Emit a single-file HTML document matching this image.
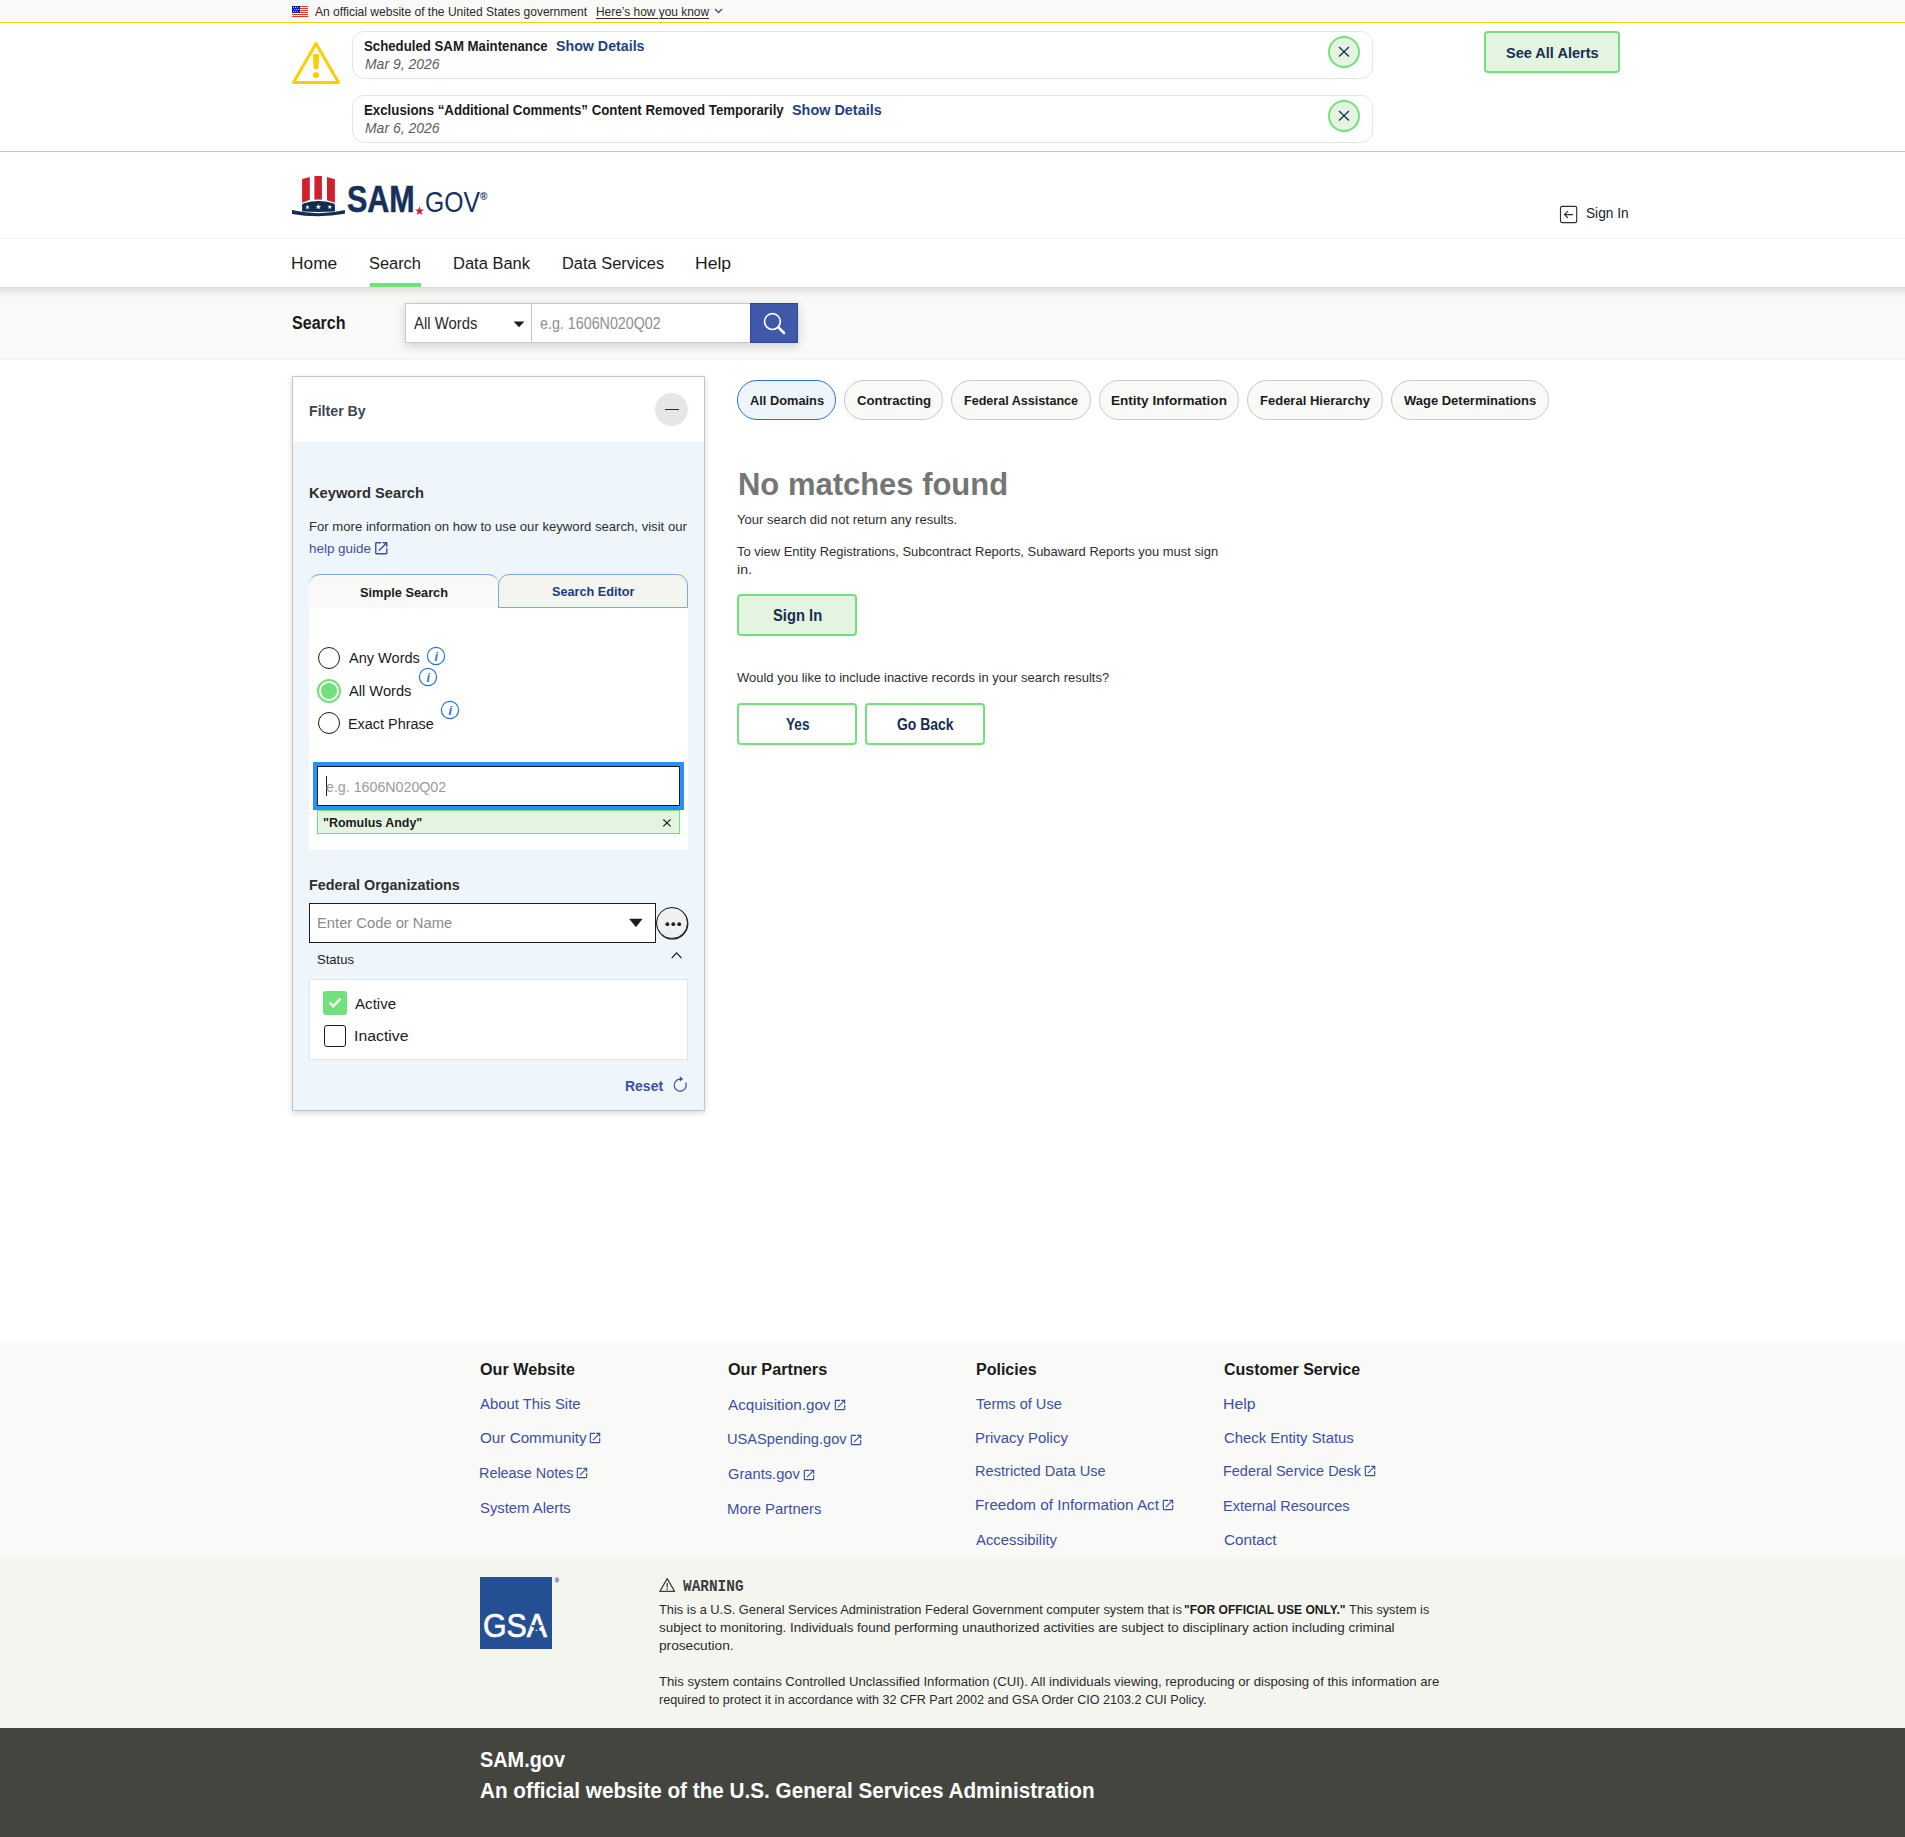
<!DOCTYPE html>
<html lang="en"><head><meta charset="utf-8"><title>SAM.gov | Search</title>
<style>
html,body{margin:0;padding:0;}
body{position:relative;width:1905px;height:1837px;overflow:hidden;background:#fff;font-family:"Liberation Sans",sans-serif;color:#1b1b1b;}
.t{position:absolute;white-space:pre;line-height:1;transform-origin:0 50%;display:block;margin:0;padding:0;border:0;background:none;font-family:"Liberation Sans",sans-serif;font-weight:400;font-style:normal;color:#1b1b1b;text-decoration:none;letter-spacing:normal;text-align:left;cursor:default;}
.a{position:absolute;box-sizing:border-box;}
svg{position:absolute;overflow:visible;}
</style></head>
<body>
<section aria-label="Official government website">
<div class="a" style="left:0px;top:0px;width:1905px;height:21px;background:#f9f9f7;"></div>
<svg style="left:292px;top:6px" width="16" height="11" viewBox="0 0 16 11"><rect width="16" height="11" fill="#fff"/><rect y="0" width="16" height="1" fill="#e0381a"/><rect y="2" width="16" height="1" fill="#e0381a"/><rect y="4" width="16" height="1" fill="#e0381a"/><rect y="6" width="16" height="1" fill="#e0381a"/><rect y="8" width="16" height="1" fill="#e0381a"/><rect y="10" width="16" height="1" fill="#e0381a"/><rect width="8" height="7" fill="#0a1fae"/><circle cx="1.5" cy="1.5" r="0.5" fill="#fff"/><circle cx="3.5" cy="1.5" r="0.5" fill="#fff"/><circle cx="5.5" cy="1.5" r="0.5" fill="#fff"/><circle cx="2.5" cy="3.45" r="0.5" fill="#fff"/><circle cx="4.5" cy="3.45" r="0.5" fill="#fff"/><circle cx="6.5" cy="3.45" r="0.5" fill="#fff"/><circle cx="1.5" cy="5.5" r="0.5" fill="#fff"/><circle cx="3.5" cy="5.5" r="0.5" fill="#fff"/><circle cx="5.5" cy="5.5" r="0.5" fill="#fff"/></svg>
<svg style="left:714px;top:8px" width="9" height="6" viewBox="0 0 9 6"><path d="M1 1 L4.5 4.5 L8 1" fill="none" stroke="#3f4fa3" stroke-width="1.4"/></svg>
<p class="t" style="left:315.4px;top:6px;font-size:12.1px;color:#2a2a2a;transform:scaleX(0.9951);">An official website of the United States government</p>
<a class="t" href="#" style="left:595.6px;top:6px;font-size:12.1px;color:#2a2a2a;transform:scaleX(0.9851);text-decoration:underline;text-decoration-thickness:1px;text-underline-offset:1.5px;">Here’s how you know</a>
</section>
<section aria-label="Alerts">
<div class="a" style="left:0px;top:22px;width:1905px;height:130px;background:#fff;border-top:1px solid #face00;border-bottom:1px solid #face00;"></div>
<svg style="left:288px;top:36px" width="56" height="52" viewBox="0 0 56 52"><path d="M28 7.5 L50.5 46.5 L5.5 46.5 Z" fill="none" stroke="#face00" stroke-width="3" stroke-linejoin="round"/><path d="M25.3 18.5 h5.4 l-0.9 14 h-3.6 Z" fill="#face00" stroke="#face00" stroke-width="1" stroke-linejoin="round"/><circle cx="28" cy="39" r="3.1" fill="#face00"/></svg>
<div class="a" style="left:352px;top:31px;width:1021px;height:48px;border:1px solid #e4e4e4;border-radius:12px;background:#fff;"></div>
<div class="a" style="left:352px;top:95px;width:1021px;height:48px;border:1px solid #e4e4e4;border-radius:12px;background:#fff;"></div>
<div class="a" style="left:1328px;top:36px;width:32px;height:32px;border:2px solid #70e17b;border-radius:50%;background:#e3f5e1;"></div>
<svg style="left:1338px;top:46px" width="12" height="12" viewBox="0 0 12 12"><path d="M1 1 L11 10.5 M11 1 L1 10.5" stroke="#162e51" stroke-width="1.3" fill="none"/></svg>
<div class="a" style="left:1328px;top:100px;width:32px;height:32px;border:2px solid #70e17b;border-radius:50%;background:#e3f5e1;"></div>
<svg style="left:1338px;top:110px" width="12" height="12" viewBox="0 0 12 12"><path d="M1 1 L11 10.5 M11 1 L1 10.5" stroke="#162e51" stroke-width="1.3" fill="none"/></svg>
<div class="a" style="left:1484px;top:31px;width:136px;height:42px;border:2px solid #70e17b;border-radius:4px;background:#e3f5e1;"></div>
<h2 class="t" style="left:364.4px;top:39px;font-size:14.9px;font-weight:700;transform:scaleX(0.8878);">Scheduled SAM Maintenance</h2>
<a class="t" href="#" style="left:555.8px;top:39px;font-size:14.9px;font-weight:700;color:#1f3f83;transform:scaleX(0.9551);">Show Details</a>
<time class="t" style="left:364.5px;top:57px;font-size:14.9px;color:#5c5c5c;font-style:italic;transform:scaleX(0.9368);">Mar 9, 2026</time>
<h2 class="t" style="left:364.2px;top:103px;font-size:14.9px;font-weight:700;transform:scaleX(0.8905);">Exclusions “Additional Comments” Content Removed Temporarily</h2>
<a class="t" href="#" style="left:791.5px;top:103px;font-size:14.9px;font-weight:700;color:#1f3f83;transform:scaleX(0.9674);">Show Details</a>
<time class="t" style="left:364.5px;top:121px;font-size:14.9px;color:#5c5c5c;font-style:italic;transform:scaleX(0.9368);">Mar 6, 2026</time>
<button class="t" type="button" style="left:1505.9px;top:45px;font-size:15.3px;font-weight:700;color:#162e51;transform:scaleX(0.9495);">See All Alerts</button>
</section>
<header>
<svg style="left:288px;top:170px" width="64" height="52" viewBox="288 170 64 52"><path d="M302.1 179.1 L309.8 176.9 L309.8 199.7 L302.1 202.75 Z" fill="#d0202e"/><path d="M314.4 176.05 L321.9 176.05 L321.9 199.7 Q318.2 199.3 314.4 199.7 Z" fill="#d0202e"/><path d="M327 176.9 L334.9 179.2 L334.9 202.75 L327 200.2 Z" fill="#d0202e"/><path d="M302.1 211.5 L302.1 205.3 Q302.1 204 304 203.3 Q318.4 198.5 333 203.3 Q334.9 204 334.9 205.3 L334.9 211.5 Q318.4 212.3 302.1 211.5 Z" fill="#112e51"/><path d="M292 210 Q318.4 216.5 344.9 210 L344.9 213.8 Q318.4 218.6 292 214 Z" fill="#112e51"/><polygon points="307.50,204.80 308.06,206.42 309.78,206.46 308.41,207.50 308.91,209.14 307.50,208.16 306.09,209.14 306.59,207.50 305.22,206.46 306.94,206.42" fill="#fff"/><polygon points="318.40,203.90 319.11,205.93 321.25,205.97 319.54,207.27 320.16,209.33 318.40,208.10 316.64,209.33 317.26,207.27 315.55,205.97 317.69,205.93" fill="#fff"/><polygon points="329.80,204.70 330.36,206.32 332.08,206.36 330.71,207.40 331.21,209.04 329.80,208.06 328.39,209.04 328.89,207.40 327.52,206.36 329.24,206.32" fill="#fff"/></svg>
<svg style="left:414px;top:205px" width="12" height="12" viewBox="0 0 12 12"><polygon points="5.50,1.20 6.63,4.45 10.07,4.52 7.33,6.59 8.32,9.88 5.50,7.92 2.68,9.88 3.67,6.59 0.93,4.52 4.37,4.45" fill="#d0202e"/></svg>
<svg style="left:1559px;top:205px" width="20" height="20" viewBox="0 0 20 20"><rect x="1.5" y="1.4" width="16.2" height="16.2" rx="1.6" fill="none" stroke="#2e2e2e" stroke-width="1.15"/><path d="M14 9.6 H5.6 M8.9 6.2 L5.5 9.6 L8.9 13" fill="none" stroke="#2e2e2e" stroke-width="1.1"/></svg>
<span class="t" style="left:346.9px;top:181px;font-size:37px;font-weight:700;color:#17305a;transform:scaleX(0.8231);-webkit-text-stroke:0.55px currentColor;">SAM</span>
<span class="t" style="left:424.8px;top:188px;font-size:28.6px;color:#17305a;transform:scaleX(0.8645);">GOV</span>
<span class="t" style="left:479.9px;top:192px;font-size:10px;font-weight:700;color:#17305a;transform:scaleX(1.0000);">®</span>
<a class="t" href="#" style="left:1585.5px;top:206px;font-size:14.9px;transform:scaleX(0.9178);">Sign In</a>
</header>
<nav aria-label="Primary navigation">
<div class="a" style="left:0px;top:238px;width:1905px;height:1px;background:#f5f5f1;"></div>
<div class="a" style="left:370px;top:283px;width:51px;height:4px;background:#70e17b;"></div>
<a class="t" href="#" style="left:291.4px;top:255px;font-size:17.1px;transform:scaleX(1.0127);">Home</a>
<a class="t" href="#" style="left:369.3px;top:255px;font-size:17.1px;transform:scaleX(0.9588);">Search</a>
<a class="t" href="#" style="left:452.9px;top:255px;font-size:17.1px;transform:scaleX(0.9650);">Data Bank</a>
<a class="t" href="#" style="left:561.7px;top:255px;font-size:17.1px;transform:scaleX(0.9597);">Data Services</a>
<a class="t" href="#" style="left:694.9px;top:255px;font-size:17.1px;transform:scaleX(1.0283);">Help</a>
</nav>
<section aria-label="Search">
<div class="a" style="left:0px;top:287px;width:1905px;height:73px;background:#f9f9f7;border-bottom:1px solid #f3f3ee;"></div>
<div class="a" style="left:0px;top:287px;width:1905px;height:11px;background:linear-gradient(rgba(0,0,0,.125),rgba(0,0,0,.07) 30%,rgba(0,0,0,.025) 65%,rgba(0,0,0,0));"></div>
<div class="a" style="left:405px;top:303px;width:393px;height:40px;box-shadow:0 3px 10px rgba(0,0,0,.17);"></div>
<div class="a" style="left:405px;top:303px;width:127px;height:40px;background:#fff;border:1px solid #c9c9c9;"></div>
<div class="a" style="left:531px;top:303px;width:219px;height:40px;background:#fff;border:1px solid #c9c9c9;border-right:none;"></div>
<div class="a" style="left:750px;top:303px;width:48px;height:40px;background:#4058a9;border:1px solid #3049a0;"></div>
<svg style="left:508px;top:316px" width="22" height="16" viewBox="0 0 22 16"><path d="M5.6 5.4 L16.4 5.4 L11 11.2 Z" fill="#1b1b1b"/></svg>
<svg style="left:760px;top:310px" width="30" height="28" viewBox="0 0 30 28"><circle cx="12.4" cy="11.6" r="7.9" fill="none" stroke="#fff" stroke-width="1.7"/><path d="M18.2 17.2 L24 23" stroke="#fff" stroke-width="2.6" stroke-linecap="round"/></svg>
<label class="t" style="left:291.7px;top:315px;font-size:17.6px;font-weight:700;transform:scaleX(0.9130);">Search</label>
<span class="t" style="left:413.7px;top:316px;font-size:15.8px;color:#2a2a2a;transform:scaleX(0.9410);">All Words</span>
<span class="t" style="left:539.8px;top:316px;font-size:15.8px;color:#8f8f8f;transform:scaleX(0.9044);">e.g. 1606N020Q02</span>
</section>
<aside aria-label="Filter By">
<div class="a" style="left:292px;top:376px;width:413px;height:735px;background:#eff6fb;border:1px solid #c6c6c6;box-shadow:0 2px 6px rgba(0,0,0,.16);"></div>
<div class="a" style="left:293px;top:377px;width:411px;height:65px;background:#fff;"></div>
<div class="a" style="left:655px;top:393px;width:33px;height:33px;background:#e6e6e6;border-radius:50%;"></div>
<div class="a" style="left:665px;top:408.7px;width:14px;height:1.6px;background:#162e51;"></div>
<svg style="left:372.73px;top:540.23px" width="16.53" height="16.53" viewBox="0 0 24 24"><path d="M19 19H5V5h7V3H5c-1.11 0-2 .9-2 2v14c0 1.1.89 2 2 2h14c1.1 0 2-.9 2-2v-7h-2v7zM14 3v2h3.59l-9.83 9.83 1.41 1.41L19 6.41V10h2V3h-7z" fill="#3f4fa3"/></svg>
<div class="a" style="left:309px;top:574px;width:190px;height:34px;background:#f9f9f7;border-top:1px solid #7ba7ee;border-radius:11px 11px 0 0;"></div>
<div class="a" style="left:498px;top:574px;width:190px;height:34px;background:#f4f5ef;border:1px solid #7ba7ee;border-radius:11px 11px 0 0;"></div>
<div class="a" style="left:309px;top:608px;width:379px;height:242px;background:#fff;"></div>
<div class="a" style="left:318px;top:647px;width:22px;height:22px;border:1.6px solid #1b1b1b;border-radius:50%;background:#fff;"></div>
<div class="a" style="left:316.8px;top:679px;width:24px;height:24px;border:2.2px solid #70e17b;border-radius:50%;background:#fff;"></div>
<div class="a" style="left:320.5px;top:682.7px;width:16.6px;height:16.6px;border-radius:50%;background:#70e17b;"></div>
<div class="a" style="left:318px;top:712.3px;width:22px;height:22px;border:1.6px solid #1b1b1b;border-radius:50%;background:#fff;"></div>
<svg style="left:426.2px;top:646.2px" width="20" height="20" viewBox="0 0 20 20"><circle cx="10" cy="10" r="8.6" fill="none" stroke="#2672de" stroke-width="1.2"/></svg>
<svg style="left:418.1px;top:667.2px" width="20" height="20" viewBox="0 0 20 20"><circle cx="10" cy="10" r="8.6" fill="none" stroke="#2672de" stroke-width="1.2"/></svg>
<svg style="left:440px;top:700.2px" width="20" height="20" viewBox="0 0 20 20"><circle cx="10" cy="10" r="8.6" fill="none" stroke="#2672de" stroke-width="1.2"/></svg>
<div class="a" style="left:317px;top:766px;width:363px;height:40px;background:#fff;border:1px solid #1b1b1b;box-shadow:0 0 0 4px #2491ff;"></div>
<div class="a" style="left:326px;top:776px;width:1px;height:20px;background:#1b1b1b;"></div>
<div class="a" style="left:317px;top:810px;width:363px;height:24px;background:#e3f5e1;border:1px solid #70e17b;"></div>
<svg style="left:662px;top:818px" width="10" height="10" viewBox="0 0 10 10"><path d="M1.3 1.4 L8.6 8.4 M8.6 1.4 L1.3 8.4" stroke="#1b1b1b" stroke-width="1.3" fill="none"/></svg>
<div class="a" style="left:309px;top:903px;width:347px;height:40px;background:#fff;border:1px solid #1b1b1b;"></div>
<svg style="left:626px;top:915px" width="20" height="16" viewBox="0 0 20 16"><path d="M3.7 4.1 L16.1 4.1 L9.9 11.8 Z" fill="#1b1b1b" stroke="#1b1b1b" stroke-width="0.6" stroke-linejoin="round"/></svg>
<div class="a" style="left:656px;top:907px;width:32px;height:32px;border:1.7px solid #1b1b1b;border-radius:50%;background:#f0f0f0;box-shadow:0.4px 0.6px 0 #1b1b1b;"></div>
<svg style="left:662px;top:920px" width="20" height="8" viewBox="0 0 20 8"><circle cx="5.4" cy="4.2" r="1.9" fill="#1b1b1b"/><circle cx="11.3" cy="4.2" r="1.9" fill="#1b1b1b"/><circle cx="17.2" cy="4.2" r="1.9" fill="#1b1b1b"/></svg>
<svg style="left:670px;top:950px" width="14" height="10" viewBox="0 0 14 10"><path d="M1.7 8.2 L6.6 2.8 L11.5 8.2" fill="none" stroke="#1b1b1b" stroke-width="1.2"/></svg>
<div class="a" style="left:309px;top:979px;width:379px;height:81px;background:#fff;border:1px solid #e3e6e8;"></div>
<div class="a" style="left:323px;top:991px;width:24px;height:24px;background:#70e17b;border-radius:3px;"></div>
<svg style="left:323px;top:991px" width="24" height="24" viewBox="0 0 24 24"><path d="M6.8 11.6 L10.3 15.2 L17.6 7.6" fill="none" stroke="#fff" stroke-width="2.4"/></svg>
<div class="a" style="left:324px;top:1025px;width:22px;height:22px;background:#fff;border:1.7px solid #1b1b1b;border-radius:3px;"></div>
<svg style="left:671px;top:1074px" width="18" height="20" viewBox="0 0 18 20"><path d="M9.2 5.2 A6 6 0 1 0 14.6 8.6" fill="none" stroke="#3f4fa3" stroke-width="1.2"/><path d="M8.8 2.2 L12.2 5 L8.8 7.6 Z" fill="#3f4fa3"/></svg>
<h2 class="t" style="left:308.5px;top:403px;font-size:15.2px;font-weight:700;color:#3d4551;transform:scaleX(0.9329);">Filter By</h2>
<h3 class="t" style="left:308.5px;top:485px;font-size:15.2px;font-weight:700;color:#2e2e2e;transform:scaleX(0.9661);">Keyword Search</h3>
<p class="t" style="left:308.5px;top:520px;font-size:13.5px;color:#2e2e2e;transform:scaleX(0.9722);">For more information on how to use our keyword search, visit our</p>
<a class="t" href="#" style="left:308.5px;top:542px;font-size:13.5px;color:#3f4fa3;transform:scaleX(0.9945);">help guide</a>
<button class="t" type="button" style="left:359.5px;top:586px;font-size:13.5px;font-weight:700;transform:scaleX(0.9461);">Simple Search</button>
<button class="t" type="button" style="left:551.8px;top:585px;font-size:13.5px;font-weight:700;color:#1c3b80;transform:scaleX(0.9392);">Search Editor</button>
<label class="t" style="left:349.0px;top:650px;font-size:15.2px;transform:scaleX(0.9578);">Any Words</label>
<label class="t" style="left:349.0px;top:683px;font-size:15.2px;transform:scaleX(0.9649);">All Words</label>
<label class="t" style="left:348.0px;top:716px;font-size:15.2px;transform:scaleX(0.9497);">Exact Phrase</label>
<span class="t" style="left:434.6px;top:651px;font-size:12.5px;font-weight:700;color:#2672de;font-style:italic;transform:scaleX(1.0000);">i</span>
<span class="t" style="left:426.5px;top:672px;font-size:12.5px;font-weight:700;color:#2672de;font-style:italic;transform:scaleX(1.0000);">i</span>
<span class="t" style="left:448.4px;top:705px;font-size:12.5px;font-weight:700;color:#2672de;font-style:italic;transform:scaleX(1.0000);">i</span>
<span class="t" style="left:326.2px;top:779px;font-size:15.5px;color:#959ca2;transform:scaleX(0.9175);">e.g. 1606N020Q02</span>
<span class="t" style="left:323.4px;top:816px;font-size:13.6px;font-weight:700;transform:scaleX(0.9164);">"Romulus Andy"</span>
<h3 class="t" style="left:308.5px;top:877px;font-size:15.2px;font-weight:700;color:#2e2e2e;transform:scaleX(0.9457);">Federal Organizations</h3>
<span class="t" style="left:317.1px;top:915px;font-size:15.5px;color:#8a8a8a;transform:scaleX(0.9511);">Enter Code or Name</span>
<h4 class="t" style="left:316.6px;top:953px;font-size:13.2px;transform:scaleX(0.9870);">Status</h4>
<label class="t" style="left:354.9px;top:996px;font-size:15.2px;transform:scaleX(0.9952);">Active</label>
<label class="t" style="left:353.7px;top:1028px;font-size:15.2px;transform:scaleX(1.0421);">Inactive</label>
<button class="t" type="button" style="left:624.5px;top:1078px;font-size:15.2px;font-weight:700;color:#3f4fa3;transform:scaleX(0.9203);">Reset</button>
</aside>
<main>
<div class="a" style="left:737px;top:380px;width:98.7px;height:40px;background:#eff6fb;border:1px solid #2672de;border-radius:20px;"></div>
<div class="a" style="left:844px;top:380px;width:98.9px;height:40px;background:#f9f9f7;border:1px solid #c9c9c9;border-radius:20px;"></div>
<div class="a" style="left:951.2px;top:380px;width:139.7px;height:40px;background:#f9f9f7;border:1px solid #c9c9c9;border-radius:20px;"></div>
<div class="a" style="left:1099.2px;top:380px;width:139.7px;height:40px;background:#f9f9f7;border:1px solid #c9c9c9;border-radius:20px;"></div>
<div class="a" style="left:1247.2px;top:380px;width:135.5px;height:40px;background:#f9f9f7;border:1px solid #c9c9c9;border-radius:20px;"></div>
<div class="a" style="left:1391px;top:380px;width:157.8px;height:40px;background:#f9f9f7;border:1px solid #c9c9c9;border-radius:20px;"></div>
<div class="a" style="left:737px;top:594px;width:120px;height:42px;border:2px solid #70e17b;border-radius:4px;background:#e3f5e1;"></div>
<div class="a" style="left:737px;top:703px;width:120px;height:42px;border:2px solid #70e17b;border-radius:4px;background:#fff;"></div>
<div class="a" style="left:865px;top:703px;width:120px;height:42px;border:2px solid #70e17b;border-radius:4px;background:#fff;"></div>
<button class="t" type="button" style="left:749.5px;top:394px;font-size:13.6px;font-weight:700;transform:scaleX(0.9425);">All Domains</button>
<button class="t" type="button" style="left:856.8px;top:394px;font-size:13.6px;font-weight:700;transform:scaleX(0.9726);">Contracting</button>
<button class="t" type="button" style="left:963.8px;top:394px;font-size:13.6px;font-weight:700;transform:scaleX(0.9245);">Federal Assistance</button>
<button class="t" type="button" style="left:1111.0px;top:394px;font-size:13.6px;font-weight:700;transform:scaleX(0.9968);">Entity Information</button>
<button class="t" type="button" style="left:1259.8px;top:394px;font-size:13.6px;font-weight:700;transform:scaleX(0.9571);">Federal Hierarchy</button>
<button class="t" type="button" style="left:1403.7px;top:394px;font-size:13.6px;font-weight:700;transform:scaleX(0.9546);">Wage Determinations</button>
<h1 class="t" style="left:737.9px;top:470px;font-size:30.8px;font-weight:700;color:#757575;transform:scaleX(1.0055);">No matches found</h1>
<p class="t" style="left:736.9px;top:513px;font-size:13.4px;color:#2e2e2e;transform:scaleX(0.9750);">Your search did not return any results.</p>
<p class="t" style="left:737.2px;top:545px;font-size:13.4px;color:#2e2e2e;transform:scaleX(0.9663);">To view Entity Registrations, Subcontract Reports, Subaward Reports you must sign</p>
<span class="t" style="left:737.4px;top:563px;font-size:13.4px;color:#2e2e2e;transform:scaleX(1.0538);">in.</span>
<button class="t" type="button" style="left:773.0px;top:608px;font-size:15.8px;font-weight:700;color:#162e51;transform:scaleX(0.9345);">Sign In</button>
<p class="t" style="left:737.2px;top:671px;font-size:13.4px;color:#2e2e2e;transform:scaleX(0.9696);">Would you like to include inactive records in your search results?</p>
<button class="t" type="button" style="left:785.7px;top:717px;font-size:15.8px;font-weight:700;color:#162e51;transform:scaleX(0.8611);">Yes</button>
<button class="t" type="button" style="left:896.9px;top:717px;font-size:15.8px;font-weight:700;color:#162e51;transform:scaleX(0.8822);">Go Back</button>
</main>
<footer>
<div class="a" style="left:0px;top:1343px;width:1905px;height:214px;background:#f9f9f7;"></div>
<div class="a" style="left:0px;top:1557px;width:1905px;height:171px;background:#f5f5f0;"></div>
<div class="a" style="left:0px;top:1728px;width:1905px;height:109px;background:#454540;"></div>
<svg style="left:588.45px;top:1430.85px" width="14.0" height="14.0" viewBox="0 0 24 24"><path d="M19 19H5V5h7V3H5c-1.11 0-2 .9-2 2v14c0 1.1.89 2 2 2h14c1.1 0 2-.9 2-2v-7h-2v7zM14 3v2h3.59l-9.83 9.83 1.41 1.41L19 6.41V10h2V3h-7z" fill="#3f4fa3"/></svg>
<svg style="left:574.55px;top:1465.95px" width="14.0" height="14.0" viewBox="0 0 24 24"><path d="M19 19H5V5h7V3H5c-1.11 0-2 .9-2 2v14c0 1.1.89 2 2 2h14c1.1 0 2-.9 2-2v-7h-2v7zM14 3v2h3.59l-9.83 9.83 1.41 1.41L19 6.41V10h2V3h-7z" fill="#3f4fa3"/></svg>
<svg style="left:832.55px;top:1397.75px" width="14.0" height="14.0" viewBox="0 0 24 24"><path d="M19 19H5V5h7V3H5c-1.11 0-2 .9-2 2v14c0 1.1.89 2 2 2h14c1.1 0 2-.9 2-2v-7h-2v7zM14 3v2h3.59l-9.83 9.83 1.41 1.41L19 6.41V10h2V3h-7z" fill="#3f4fa3"/></svg>
<svg style="left:848.85px;top:1432.75px" width="14.0" height="14.0" viewBox="0 0 24 24"><path d="M19 19H5V5h7V3H5c-1.11 0-2 .9-2 2v14c0 1.1.89 2 2 2h14c1.1 0 2-.9 2-2v-7h-2v7zM14 3v2h3.59l-9.83 9.83 1.41 1.41L19 6.41V10h2V3h-7z" fill="#3f4fa3"/></svg>
<svg style="left:801.55px;top:1467.75px" width="14.0" height="14.0" viewBox="0 0 24 24"><path d="M19 19H5V5h7V3H5c-1.11 0-2 .9-2 2v14c0 1.1.89 2 2 2h14c1.1 0 2-.9 2-2v-7h-2v7zM14 3v2h3.59l-9.83 9.83 1.41 1.41L19 6.41V10h2V3h-7z" fill="#3f4fa3"/></svg>
<svg style="left:1160.85px;top:1498.35px" width="14.0" height="14.0" viewBox="0 0 24 24"><path d="M19 19H5V5h7V3H5c-1.11 0-2 .9-2 2v14c0 1.1.89 2 2 2h14c1.1 0 2-.9 2-2v-7h-2v7zM14 3v2h3.59l-9.83 9.83 1.41 1.41L19 6.41V10h2V3h-7z" fill="#3f4fa3"/></svg>
<svg style="left:1362.95px;top:1464.25px" width="14.0" height="14.0" viewBox="0 0 24 24"><path d="M19 19H5V5h7V3H5c-1.11 0-2 .9-2 2v14c0 1.1.89 2 2 2h14c1.1 0 2-.9 2-2v-7h-2v7zM14 3v2h3.59l-9.83 9.83 1.41 1.41L19 6.41V10h2V3h-7z" fill="#3f4fa3"/></svg>
<div class="a" style="left:480px;top:1577px;width:72px;height:72px;background:#245093;"></div>
<svg style="left:658px;top:1576px" width="19" height="18" viewBox="0 0 19 18"><path d="M9.2 2.6 L16.6 15.4 L1.8 15.4 Z" fill="none" stroke="#3d3d3d" stroke-width="1.2" stroke-linejoin="round"/><path d="M9.2 7 V11.4 M9.2 12.6 V14" stroke="#3d3d3d" stroke-width="1.3"/></svg>
<svg style="left:526px;top:1616px;z-index:3" width="22" height="20" viewBox="526 1616 22 20"><polygon points="536.50,1620.80 538.00,1625.13 542.59,1625.22 538.93,1627.99 540.26,1632.38 536.50,1629.76 532.74,1632.38 534.07,1627.99 530.41,1625.22 535.00,1625.13" fill="#245093"/></svg>
<h3 class="t" style="left:479.8px;top:1362px;font-size:16.8px;font-weight:700;transform:scaleX(0.9630);">Our Website</h3>
<h3 class="t" style="left:727.8px;top:1362px;font-size:16.8px;font-weight:700;transform:scaleX(0.9668);">Our Partners</h3>
<h3 class="t" style="left:975.6px;top:1362px;font-size:16.8px;font-weight:700;transform:scaleX(0.9547);">Policies</h3>
<h3 class="t" style="left:1223.6px;top:1362px;font-size:16.8px;font-weight:700;transform:scaleX(0.9539);">Customer Service</h3>
<a class="t" href="#" style="left:480.2px;top:1397px;font-size:14.9px;color:#3f4fa3;transform:scaleX(0.9983);">About This Site</a>
<a class="t" href="#" style="left:479.7px;top:1431px;font-size:14.9px;color:#3f4fa3;transform:scaleX(1.0233);">Our Community</a>
<a class="t" href="#" style="left:479.2px;top:1466px;font-size:14.9px;color:#3f4fa3;transform:scaleX(0.9657);">Release Notes</a>
<a class="t" href="#" style="left:479.6px;top:1501px;font-size:14.9px;color:#3f4fa3;transform:scaleX(0.9966);">System Alerts</a>
<a class="t" href="#" style="left:728.2px;top:1398px;font-size:14.9px;color:#3f4fa3;transform:scaleX(1.0233);">Acquisition.gov</a>
<a class="t" href="#" style="left:727.3px;top:1432px;font-size:14.9px;color:#3f4fa3;transform:scaleX(0.9833);">USASpending.gov</a>
<a class="t" href="#" style="left:727.7px;top:1467px;font-size:14.9px;color:#3f4fa3;transform:scaleX(0.9858);">Grants.gov</a>
<a class="t" href="#" style="left:727.2px;top:1502px;font-size:14.9px;color:#3f4fa3;transform:scaleX(1.0005);">More Partners</a>
<a class="t" href="#" style="left:976.1px;top:1397px;font-size:14.9px;color:#3f4fa3;transform:scaleX(0.9778);">Terms of Use</a>
<a class="t" href="#" style="left:975.2px;top:1431px;font-size:14.9px;color:#3f4fa3;transform:scaleX(1.0018);">Privacy Policy</a>
<a class="t" href="#" style="left:975.2px;top:1464px;font-size:14.9px;color:#3f4fa3;transform:scaleX(0.9805);">Restricted Data Use</a>
<a class="t" href="#" style="left:975.2px;top:1498px;font-size:14.9px;color:#3f4fa3;transform:scaleX(1.0240);">Freedom of Information Act</a>
<a class="t" href="#" style="left:976.2px;top:1533px;font-size:14.9px;color:#3f4fa3;transform:scaleX(0.9990);">Accessibility</a>
<a class="t" href="#" style="left:1222.9px;top:1397px;font-size:14.9px;color:#3f4fa3;transform:scaleX(1.0624);">Help</a>
<a class="t" href="#" style="left:1223.5px;top:1431px;font-size:14.9px;color:#3f4fa3;transform:scaleX(0.9989);">Check Entity Status</a>
<a class="t" href="#" style="left:1223.0px;top:1464px;font-size:14.9px;color:#3f4fa3;transform:scaleX(0.9698);">Federal Service Desk</a>
<a class="t" href="#" style="left:1223.0px;top:1499px;font-size:14.9px;color:#3f4fa3;transform:scaleX(0.9745);">External Resources</a>
<a class="t" href="#" style="left:1223.5px;top:1533px;font-size:14.9px;color:#3f4fa3;transform:scaleX(1.0250);">Contact</a>
<span class="t" style="left:483.4px;top:1609px;font-size:33px;color:#fbfbf8;transform:scaleX(0.9183);-webkit-text-stroke:0.7px currentColor;">GSA</span>
<span class="t" style="left:554.6px;top:1578px;font-size:6.5px;font-weight:700;color:#234e91;transform:scaleX(1.0000);">®</span>
<h4 class="t" style="left:683.2px;top:1579px;font-size:16.4px;font-weight:700;color:#3d3d3d;font-family:'Liberation Mono',monospace;transform:scaleX(0.8796);">WARNING</h4>
<p class="t" style="left:659.2px;top:1603px;font-size:13.2px;color:#2b2b2b;transform:scaleX(0.9732);">This is a U.S. General Services Administration Federal Government computer system that is</p>
<strong class="t" style="left:1184.4px;top:1603px;font-size:13.2px;font-weight:700;transform:scaleX(0.9146);">"FOR OFFICIAL USE ONLY."</strong>
<p class="t" style="left:1348.9px;top:1603px;font-size:13.2px;color:#2b2b2b;transform:scaleX(0.9604);">This system is</p>
<p class="t" style="left:658.9px;top:1621px;font-size:13.2px;color:#2b2b2b;transform:scaleX(1.0157);">subject to monitoring. Individuals found performing unauthorized activities are subject to disciplinary action including criminal</p>
<p class="t" style="left:658.6px;top:1639px;font-size:13.2px;color:#2b2b2b;transform:scaleX(1.0377);">prosecution.</p>
<p class="t" style="left:659.1px;top:1675px;font-size:13.2px;color:#2b2b2b;transform:scaleX(0.9967);">This system contains Controlled Unclassified Information (CUI). All individuals viewing, reproducing or disposing of this information are</p>
<p class="t" style="left:658.7px;top:1693px;font-size:13.2px;color:#2b2b2b;transform:scaleX(0.9556);">required to protect it in accordance with 32 CFR Part 2002 and GSA Order CIO 2103.2 CUI Policy.</p>
<p class="t" style="left:480.1px;top:1749px;font-size:22px;font-weight:700;color:#fff;transform:scaleX(0.9030);">SAM.gov</p>
<p class="t" style="left:480.1px;top:1780px;font-size:22px;font-weight:700;color:#fff;transform:scaleX(0.9408);">An official website of the U.S. General Services Administration</p>
</footer>
</body></html>
